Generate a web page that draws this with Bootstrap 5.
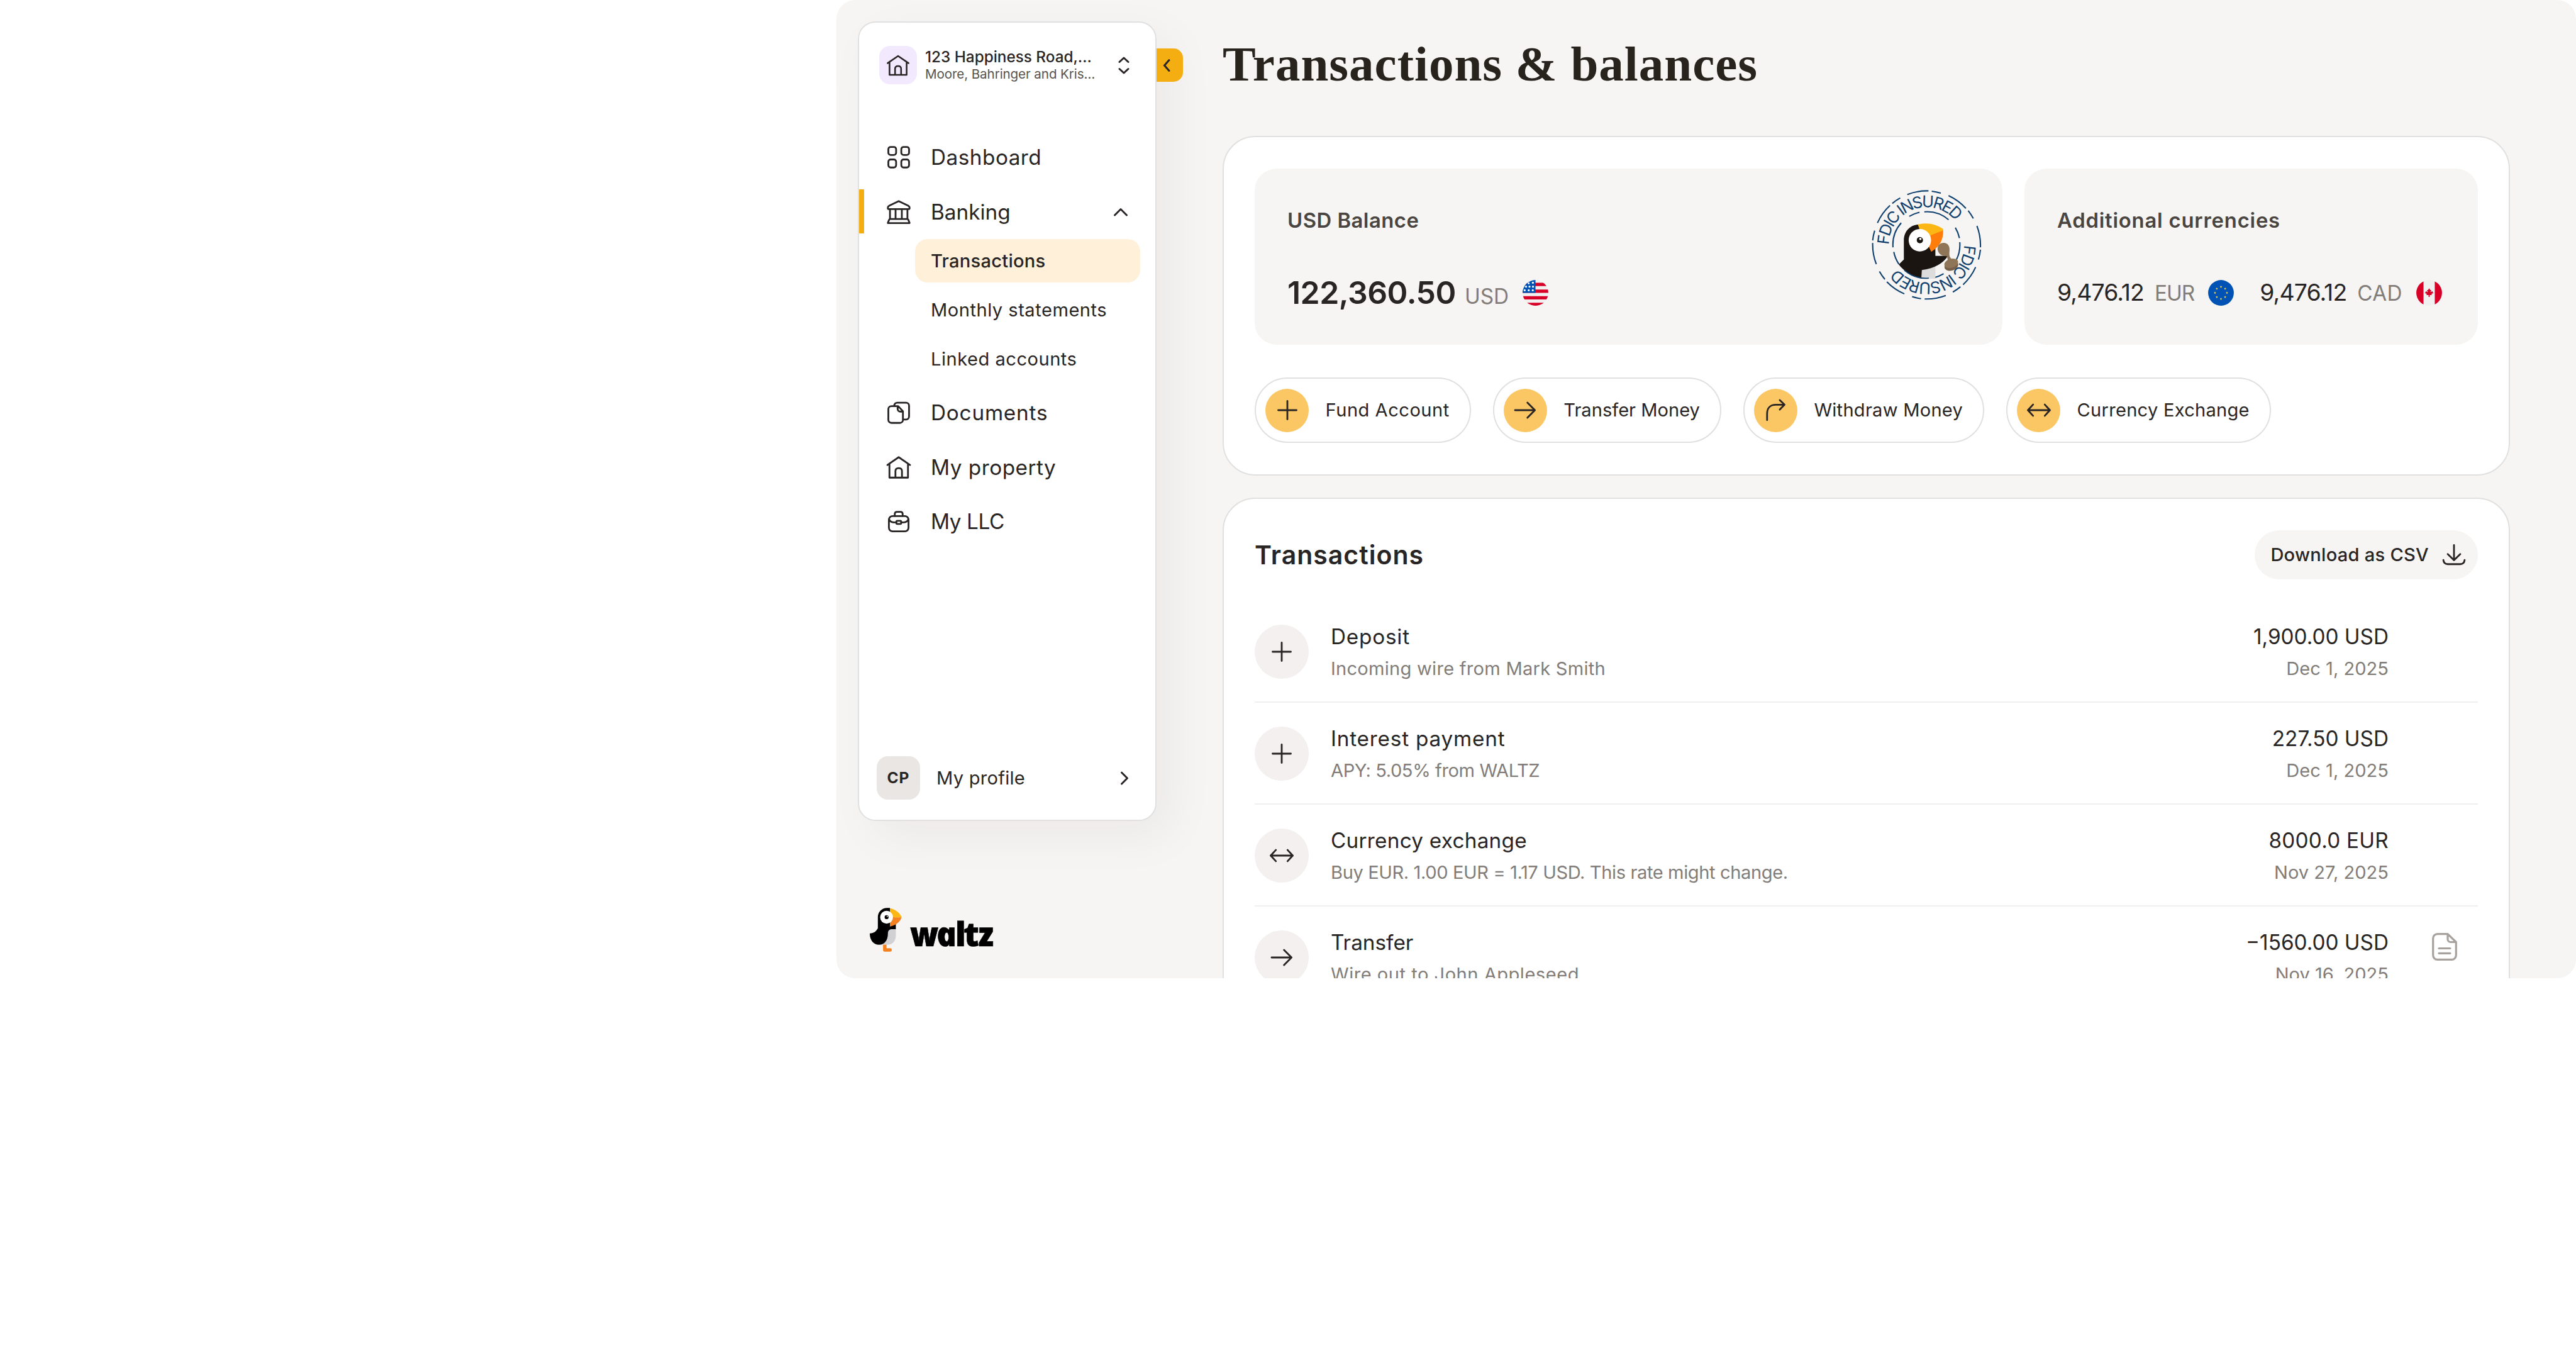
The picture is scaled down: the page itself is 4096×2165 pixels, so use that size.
<!DOCTYPE html>
<html lang="en">
<head>
  <meta charset="UTF-8">
  <title>Transactions & balances</title>
  <meta name="viewport" content="width=device-width, initial-scale=1">
  <link href="https://cdn.jsdelivr.net/npm/bootstrap@5.3.0/dist/css/bootstrap.min.css" rel="stylesheet">
  <style>
    :root { --ink: #292524; --sand: #f6f5f3; --line: #e1e0e0; --gold: #f4ae12; }
    body { font-family: Inter, "Liberation Sans", sans-serif; color: var(--ink); background: #fff; letter-spacing: 0; }
    a { color: inherit; text-decoration: none; }
    svg { display: block; flex: none; overflow: visible; }
    .ico { width: 52px; height: 52px; fill: none; stroke: currentColor; stroke-width: 1.3; stroke-linecap: round; stroke-linejoin: round; }

    /* type scale */
    .t16 { font-size: 33.3px; line-height: 46px; }
    .t14 { font-size: 29.1px; line-height: 40px; }
    .ls-n4 { letter-spacing: -.4px; }
    .ls-n10 { letter-spacing: -1px; }
    .ls-2 { letter-spacing: .25px; }
    .ls-5 { letter-spacing: .5px; }
    .ls-8 { letter-spacing: .8px; }
    .dim { color: #827d79; }

    /* shell */
    .app { width: 2766px; height: 1555px; background: var(--sand); border-radius: 30px; }
    .side-col { width: 614px; padding: 34px 0 0 34px; }
    .side { width: 475px; height: 1271px; background: #fff; border: 2px solid var(--line); border-radius: 28px; box-shadow: 24px 24px 76px rgba(50, 25, 20, .05); padding: 37px 0 32px; }
    .toggle { left: 473px; top: 41px; width: 42px; height: 53px; background: var(--gold); border-radius: 0 15px 15px 0; padding-right: 8px; }

    /* account picker */
    .picker { padding: 0 41px 0 32px; height: 61px; gap: 13px; }
    .house { width: 60px; height: 61px; border-radius: 17px; background: #f3e9ff; }
    .house .ico { width: 48px; height: 48px; }
    .acc-name { font-size: 24.3px; line-height: 29px; font-weight: 500; }
    .acc-owner { font-size: 20.6px; line-height: 26px; color: #57534e; letter-spacing: -.1px; }

    /* navigation */
    .menu { margin-top: 73px; }
    .menu-item { height: 86.4px; padding: 0 43px 0 37px; gap: 25px; }
    .menu-item.current::before { content: ""; position: absolute; left: 0; top: 8px; width: 8px; height: 70px; background: var(--gold); }
    .menu-sub { margin: 0 24px 0 89px; }
    .menu-sub a { height: 69.1px; margin-bottom: 8.7px; padding: 2px 0 0 25px; border-radius: 20px; }
    .menu-sub a.current { background: #fef0d9; font-weight: 500; }
    .me { padding: 0 27px 0 28px; gap: 26px; }
    .avatar { width: 69px; height: 69px; border-radius: 18px; background: #e9e6e3; font-size: 24.5px; font-weight: 700; letter-spacing: 1px; }

    /* brand */
    .brand { margin: 138px 0 0 19px; gap: 13px; }
    /* unslanted italic, for the single-storey a */
    .wordmark { font-family: "Open Sans", sans-serif; font-style: italic; font-weight: 800; font-size: 53px; line-height: 50px; letter-spacing: -2.6px; color: #000; transform: skewX(12deg); -webkit-text-stroke: .6px #000; margin-top: 12px; }

    /* content */
    .content { width: 2047px; padding-top: 57px; }
    h1 { font-family: "Liberation Serif", serif; font-weight: 700; font-size: 79px; line-height: 90px; letter-spacing: 1px; color: #29231d; margin: 0 0 69px; }
    .panel { background: #fff; border: 2px solid var(--line); border-radius: 52px; padding: 50px 49px; }
    .balances { gap: 35px; height: 280px; }
    .balance { background: var(--sand); border-radius: 35px; padding: 59px 52px 0; }
    .balance-main { width: 1189px; }
    .balance-label { font-size: 32.8px; line-height: 46px; font-weight: 600; color: #4a4541; margin-bottom: 62px; }
    .balance-total { font-size: 49.9px; line-height: 60px; font-weight: 600; letter-spacing: -.5px; }
    .money { font-size: 37.4px; line-height: 60px; letter-spacing: -.9px; }
    .code { margin-left: 14px; }
    .money + .code { margin-left: 17px; }
    .flag { width: 43px; height: 43px; margin-left: 21px; }
    .flag + .money { margin-left: 40px; }
    .stamp { right: 32px; top: 32px; width: 178.4px; height: 178.4px; }
    .quick { gap: 35px; margin-top: 52px; }
    .quick a { height: 104px; border: 2px solid var(--line); border-radius: 52px; padding: 0 32px 0 15px; gap: 26.5px; }
    .quick .dot { width: 69px; height: 69px; background: #fbc764; }
    .history { margin-top: 35px; height: 900px; padding-top: 50px; }
    h2 { font-size: 41px; line-height: 78px; font-weight: 600; letter-spacing: 1px; margin: 0; }
    .csv { height: 78px; border-radius: 39px; background: var(--sand); padding: 0 12px 0 25px; gap: 14px; font-weight: 500; }
    .rows { margin-top: 34px; }
    .entry { height: 162px; gap: 35px; border-bottom: 2px solid #f0efef; padding-top: 2px; }
    .entry .dot { width: 86px; height: 86px; background: #f3f0ef; }
    .entry-text { gap: 8px; }
    .entry-note { width: 107px; padding: 0 0 34px 34px; }
  </style>
</head>
<body>

  <svg width="0" height="0" class="position-absolute">
    <symbol id="grid" viewBox="0 0 24 24"><rect x="4.4" y="4.4" width="5.7" height="5.9" rx="1.7"/><rect x="13.9" y="4.4" width="5.7" height="5.9" rx="1.7"/><rect x="4.4" y="13.6" width="5.7" height="5.9" rx="1.7"/><rect x="13.9" y="13.6" width="5.7" height="5.9" rx="1.7"/></symbol>
    <symbol id="bank" viewBox="0 0 24 24"><path d="M4 9.100c0-.8.3-1.300 1-1.700L12 4l7 3.400c.7.4 1 .9 1 1.700 0 .5-.3.8-.8.8H4.800C4.300 9.900 4 9.600 4 9.100zM5.600 10v7M9.700 10v7M14.300 10v7M18.400 10v7M5.800 17.100h12.400c.4 0 .7.2.8.5l1 2.500H4l1-2.500c.1-.3.4-.5.8-.5z"/></symbol>
    <symbol id="docs" viewBox="0 0 24 24"><path d="M11.600 7.200H6.600a2.200 2.200 0 0 0-2.200 2.200v7.900a2.200 2.200 0 0 0 2.200 2.200h6.300a2.200 2.200 0 0 0 2.200-2.200v-6.400zM11.200 7.300v1.800c0 1.200.8 2.100 2 2.100h1.800M8.700 7.100c0-1.500.9-2.400 2.300-2.400h6.400a2.200 2.200 0 0 1 2.200 2.200v7.900a2.200 2.200 0 0 1-2.200 2.200h-2.200"/></symbol>
    <symbol id="home" viewBox="0 0 24 24"><path d="M3.700 10.200 12 4.500l8.300 5.700M5.200 9.300v10.200h13.600V9.300M9.600 19.400v-4.700c0-1.400.9-2.200 2.400-2.200s2.400.8 2.400 2.200v4.700"/></symbol>
    <symbol id="case" viewBox="0 0 24 24"><rect x="4.800" y="8" width="14.400" height="11.200" rx="2.700"/><path d="M9.100 7.900V6.500c0-1 .7-1.600 1.600-1.600h2.600c.9 0 1.600.6 1.600 1.600v1.400M4.900 10.200c.5 1.500 1.600 2.300 3.300 2.400h2M19.100 10.200c-.5 1.500-1.600 2.300-3.300 2.400h-2"/><rect x="10.300" y="11.500" width="3.500" height="2.300" rx=".6"/></symbol>
    <symbol id="plus" viewBox="0 0 24 24"><path d="M12 5.300v13.400M5.300 12h13.400"/></symbol>
    <symbol id="arrow" viewBox="0 0 24 24"><path d="M4.600 12h14.600M13.700 6.500l5.500 5.500-5.500 5.500"/></symbol>
    <symbol id="turn" viewBox="0 0 24 24"><path d="M5.900 19.300v-4.800c0-4 2.300-6.500 6.400-6.500h6M15.200 4.600 18.700 8l-3.500 3.500"/></symbol>
    <symbol id="swap" viewBox="0 0 24 24"><path d="M4.100 12h15.800M7.700 7.900 3.900 12l3.800 4.100M16.300 7.900l3.800 4.100-3.800 4.100"/></symbol>
    <path id="star" d="M0-1.200.3-.4h.85l-.7.5.27.85L0 .45l-.72.5.27-.85-.7-.5h.85z"/>
  </svg>

  <div class="app d-flex ms-auto overflow-hidden">

    <div class="side-col flex-shrink-0">
      <aside class="side position-relative d-flex flex-column">
        <a href="#" class="toggle position-absolute d-flex align-items-center justify-content-center">
          <svg width="12" height="20" viewBox="0 0 12 20" fill="none" stroke="#292524" stroke-width="3" stroke-linecap="round"><path d="M9 1.500 1.500 10 9 18.500"/></svg>
        </a>

        <div class="picker d-flex align-items-center">
          <div class="house d-flex align-items-center justify-content-center flex-shrink-0"><svg class="ico"><use href="#home"/></svg></div>
          <div>
            <div class="acc-name">123 Happiness Road,…</div>
            <div class="acc-owner">Moore, Bahringer and Kris…</div>
          </div>
          <svg class="ms-auto" width="18" height="28" viewBox="0 0 18 28" fill="none" stroke="#292524" stroke-width="3" stroke-linecap="round" stroke-linejoin="round"><path d="M2 8.500 9 2l7 6.500M2 19.500 9 26l7-6.500"/></svg>
        </div>

        <nav class="menu">
          <a href="#" class="menu-item d-flex align-items-center"><svg class="ico"><use href="#grid"/></svg><span class="t16 ls-5">Dashboard</span></a>
          <a href="#" class="menu-item current position-relative d-flex align-items-center"><svg class="ico"><use href="#bank"/></svg><span class="t16">Banking</span>
            <svg class="ms-auto" width="24" height="14" viewBox="0 0 24 14" fill="none" stroke="#292524" stroke-width="2.900" stroke-linecap="round" stroke-linejoin="round"><path d="M2.500 12 12 2.500 21.500 12"/></svg></a>
          <div class="menu-sub t14">
            <a href="#" class="current d-flex align-items-center ls-2">Transactions</a>
            <a href="#" class="d-flex align-items-center ls-5">Monthly statements</a>
            <a href="#" class="d-flex align-items-center ls-5">Linked accounts</a>
          </div>
          <a href="#" class="menu-item d-flex align-items-center"><svg class="ico"><use href="#docs"/></svg><span class="t16 ls-8">Documents</span></a>
          <a href="#" class="menu-item d-flex align-items-center"><svg class="ico"><use href="#home"/></svg><span class="t16 ls-5">My property</span></a>
          <a href="#" class="menu-item d-flex align-items-center"><svg class="ico"><use href="#case"/></svg><span class="t16 ls-n4">My LLC</span></a>
        </nav>

        <a href="#" class="me d-flex align-items-center mt-auto">
          <span class="avatar d-flex align-items-center justify-content-center">CP</span>
          <span class="t14 ls-2">My profile</span>
          <svg class="ms-auto" width="30" height="22" viewBox="0 0 30 22" fill="none" stroke="#292524" stroke-width="3" stroke-linecap="round" stroke-linejoin="round"><path d="M3.500 2 12.500 11l-9 9"/></svg>
        </a>
      </aside>

      <div class="brand d-flex align-items-center">
        <svg width="50.600" height="69.800" viewBox="82 101 193 266">
          <path d="M173 322v34h32" fill="none" stroke="#f58220" stroke-width="21" stroke-linejoin="round" stroke-linecap="round"/>
          <path d="M190 231h50v40c0 33-20 54-52 54h-40z" fill="#d1d1d3"/>
          <path d="M204 102h-18a55 55 0 0 0-55 55v68c-10 19-24 31-49 31 0 42 24 69 56 69 34 0 54-28 54-68 0-17 9-26 24-26h24v-44z"/>
          <path d="M204 104c34 6 62 28 71 55h-71z" fill="#fdb714"/>
          <path d="M204 159h71c-9 29-37 49-71 55z" fill="#f58220"/>
          <circle cx="184" cy="158" r="39" fill="#fff"/>
          <circle cx="184" cy="158" r="12"/><circle cx="188" cy="153" r="3.500" fill="#fff"/>
        </svg>
        <span class="wordmark">waltz</span>
      </div>
    </div>

    <main class="content flex-shrink-0">
      <h1>Transactions &amp; balances</h1>

      <section class="panel">
        <div class="balances d-flex">
          <div class="balance balance-main position-relative">
            <div class="balance-label ls-5">USD Balance</div>
            <div class="d-flex align-items-baseline">
              <span class="balance-total">122,360.50</span>
              <span class="t16 dim code">USD</span>
              <svg class="flag align-self-center" viewBox="0 0 24 24">
                <clipPath id="disc"><circle cx="12" cy="12" r="11.400"/></clipPath>
                <g clip-path="url(#disc)">
                  <path fill="#f0f0f0" d="M0 0h24v24H0z"/>
                  <path stroke="#d80027" stroke-width="3" d="M0 4.500h24M0 10.500h24M0 16.400h24M0 22.300h24"/>
                  <path fill="#0052b4" d="M0 0h12v12H0z"/>
                  <g fill="#fff"><circle cx="9.700" cy="3" r=".9"/><circle cx="6" cy="3.600" r=".8"/><circle cx="3.600" cy="6.500" r=".9"/><circle cx="6.700" cy="6.500" r=".9"/><circle cx="9.800" cy="6.500" r=".9"/><circle cx="2.400" cy="9.700" r=".9"/><circle cx="6" cy="9.700" r=".9"/><circle cx="9.600" cy="9.700" r=".9"/></g>
                </g>
              </svg>
            </div>

            <svg class="stamp position-absolute" viewBox="116 91 680 680">
              <g fill="none" stroke="#0f406f" stroke-width="8">
                <path d="M340 126A327 327 0 0 1 468 104M488 106A327 327 0 0 1 543 118M590 133A327 327 0 0 1 695 210M709 224A327 327 0 0 1 740 271M762 316A327 327 0 0 1 783 446M783 460A327 327 0 0 1 771 520M754 566A327 327 0 0 1 678 672M662 685A327 327 0 0 1 616 717M573 738A327 327 0 0 1 445 759M423 757A327 327 0 0 1 369 745M322 728A327 327 0 0 1 216 655M204 640A327 327 0 0 1 171 592M152 548A327 327 0 0 1 130 420M130 404A327 327 0 0 1 142 345M159 298A327 327 0 0 1 235 192M249 180A327 327 0 0 1 297 147"/>
                <path d="M352 258A202 202 0 0 1 414 234M443 231A202 202 0 0 1 590 279M631 327A202 202 0 0 1 656 390M658 415A202 202 0 0 1 638 520M560 606A202 202 0 0 1 498 631M289 548A202 202 0 0 1 258 474M253 446A202 202 0 0 1 303 298"/>
              </g>
              <path id="ring" d="M228 431a228 228 0 0 1 456 0" fill="none"/>
              <g id="insured" font-family="Inter" font-size="97" fill="#0f406f"><text textLength="562" lengthAdjust="spacing"><textPath href="#ring" textLength="562">FDIC INSURED</textPath></text></g>
              <use href="#insured" transform="rotate(180 456 431)"/>
              <path fill="#dcdcdc" d="M424 582q44-3 86-22v75q-44 3-86-4z"/>
              <path fill="#1a1510" d="M410 307c-54 4-91 42-91 98v115l-31 30c35 44 82 74 137 81l3-47c80-11 130-42 158-86h-76v-100z"/>
              <path fill="#fdb714" d="M404 308c50-14 108-6 153 27v12l-78 35-60-32z"/>
              <path fill="#ff7d0a" d="M557 344c3 54-22 100-72 129l-18-38 10-60z"/>
              <circle cx="416" cy="403" r="68" fill="#fff"/>
              <circle cx="416" cy="403" r="19" fill="#1a1510"/><circle cx="419" cy="395" r="7" fill="#fff"/>
              <ellipse cx="607" cy="558" rx="43" ry="29" transform="rotate(-17 607 558)" fill="#78604a"/>
              <ellipse cx="606" cy="543" rx="43" ry="27" transform="rotate(-17 606 543)" fill="#8f7658"/>
              <path fill="#8f7658" d="M524 462c-4-27 14-43 36-43 25 0 38 20 36 46-2 22-3 35 7 46l22 20-46 12c8-16 6-30 0-43-25 2-50-11-55-38z"/>
              <path fill="none" stroke="#0f406f" stroke-width="7" d="M470 633A202 202 0 0 1 322 585"/>
            </svg>
          </div>

          <div class="balance flex-fill">
            <div class="balance-label ls-8">Additional currencies</div>
            <div class="d-flex align-items-baseline">
              <span class="money">9,476.12</span>
              <span class="t16 dim ls-n10 code">EUR</span>
              <svg class="flag align-self-center" viewBox="0 0 24 24">
                <circle cx="12" cy="12" r="11.400" fill="#0052b4"/>
                <g fill="#ffda44"><use href="#star" x="12" y="6.700"/><use href="#star" x="15.700" y="8.300"/><use href="#star" x="17.300" y="12"/><use href="#star" x="15.700" y="15.800"/><use href="#star" x="12" y="17.400"/><use href="#star" x="8.300" y="15.800"/><use href="#star" x="6.700" y="12"/><use href="#star" x="8.300" y="8.300"/></g>
              </svg>
              <span class="money">9,476.12</span>
              <span class="t16 dim ls-2 code">CAD</span>
              <svg class="flag align-self-center" viewBox="0 0 24 24">
                <g clip-path="url(#disc)">
                  <path fill="#f0f0f0" d="M0 0h24v24H0z"/>
                  <path fill="#d80027" d="M0 0h7v24H0zM17 0h7v24h-7zM14 13l2-1-1-.5v-1l-2 1 1-2h-1l-1-1.500-1 1.500h-1l1 2-2-1v1l-1 .5 2 1-.5 1h2v1.600h1V14h2z"/>
                </g>
              </svg>
            </div>
          </div>
        </div>

        <div class="quick d-flex">
          <a href="#" class="d-flex align-items-center"><span class="dot rounded-circle d-flex align-items-center justify-content-center"><svg class="ico"><use href="#plus"/></svg></span><span class="t14 ls-5">Fund Account</span></a>
          <a href="#" class="d-flex align-items-center"><span class="dot rounded-circle d-flex align-items-center justify-content-center"><svg class="ico"><use href="#arrow"/></svg></span><span class="t14">Transfer Money</span></a>
          <a href="#" class="d-flex align-items-center"><span class="dot rounded-circle d-flex align-items-center justify-content-center"><svg class="ico"><use href="#turn"/></svg></span><span class="t14 ls-2">Withdraw Money</span></a>
          <a href="#" class="d-flex align-items-center"><span class="dot rounded-circle d-flex align-items-center justify-content-center"><svg class="ico"><use href="#swap"/></svg></span><span class="t14 ls-2">Currency Exchange</span></a>
        </div>
      </section>

      <section class="panel history">
        <div class="d-flex justify-content-between">
          <h2>Transactions</h2>
          <a href="#" class="csv t14 d-flex align-items-center"><span class="ls-2">Download as CSV</span><svg class="ico" viewBox="0 0 24 24"><path d="M12 4.800v11M7.400 11.400l4.600 4.500 4.600-4.500M4.200 15.800c.2 2 1.200 3 3.200 3h9.200c2 0 3-1 3.200-3"/></svg></a>
        </div>

        <div class="rows">
          <div class="entry d-flex align-items-center">
            <span class="dot rounded-circle d-flex align-items-center justify-content-center"><svg class="ico"><use href="#plus"/></svg></span>
            <div class="entry-text d-flex flex-column"><span class="t16 ls-8">Deposit</span><span class="t14 dim ls-2">Incoming wire from Mark Smith</span></div>
            <div class="entry-text d-flex flex-column text-end ms-auto"><span class="t16">1,900.00 USD</span><span class="t14 dim">Dec 1, 2025</span></div>
            <div class="entry-note"></div>
          </div>
          <div class="entry d-flex align-items-center">
            <span class="dot rounded-circle d-flex align-items-center justify-content-center"><svg class="ico"><use href="#plus"/></svg></span>
            <div class="entry-text d-flex flex-column"><span class="t16 ls-8">Interest payment</span><span class="t14 dim ls-n4">APY: 5.05% from WALTZ</span></div>
            <div class="entry-text d-flex flex-column text-end ms-auto"><span class="t16">227.50 USD</span><span class="t14 dim">Dec 1, 2025</span></div>
            <div class="entry-note"></div>
          </div>
          <div class="entry d-flex align-items-center">
            <span class="dot rounded-circle d-flex align-items-center justify-content-center"><svg class="ico"><use href="#swap"/></svg></span>
            <div class="entry-text d-flex flex-column"><span class="t16 ls-2">Currency exchange</span><span class="t14 dim ls-n4">Buy EUR. 1.00 EUR = 1.17 USD. This rate might change.</span></div>
            <div class="entry-text d-flex flex-column text-end ms-auto"><span class="t16 ls-2">8000.0 EUR</span><span class="t14 dim">Nov 27, 2025</span></div>
            <div class="entry-note"></div>
          </div>
          <div class="entry d-flex align-items-center">
            <span class="dot rounded-circle d-flex align-items-center justify-content-center"><svg class="ico"><use href="#arrow"/></svg></span>
            <div class="entry-text d-flex flex-column"><span class="t16">Transfer</span><span class="t14 dim ls-5">Wire out to John Appleseed</span></div>
            <div class="entry-text d-flex flex-column text-end ms-auto"><span class="t16">−1560.00 USD</span><span class="t14 dim">Nov 16, 2025</span></div>
            <div class="entry-note"><svg width="40" height="44" viewBox="0 0 40 44" fill="none" stroke="#a8a29e" stroke-width="3.200" stroke-linecap="round" stroke-linejoin="round"><path d="M25 1.700H9A7 7 0 0 0 1.700 9v26A7 7 0 0 0 9 42.300h22a7 7 0 0 0 7.300-7.300V14.500zM25 1.700V10a4.500 4.500 0 0 0 4.500 4.500h8.800M11 24.500h18M11 32.300h18"/></svg></div>
          </div>
        </div>
      </section>
    </main>
  </div>

  <script src="https://cdn.jsdelivr.net/npm/bootstrap@5.3.0/dist/js/bootstrap.bundle.min.js"></script>
</body>
</html>
